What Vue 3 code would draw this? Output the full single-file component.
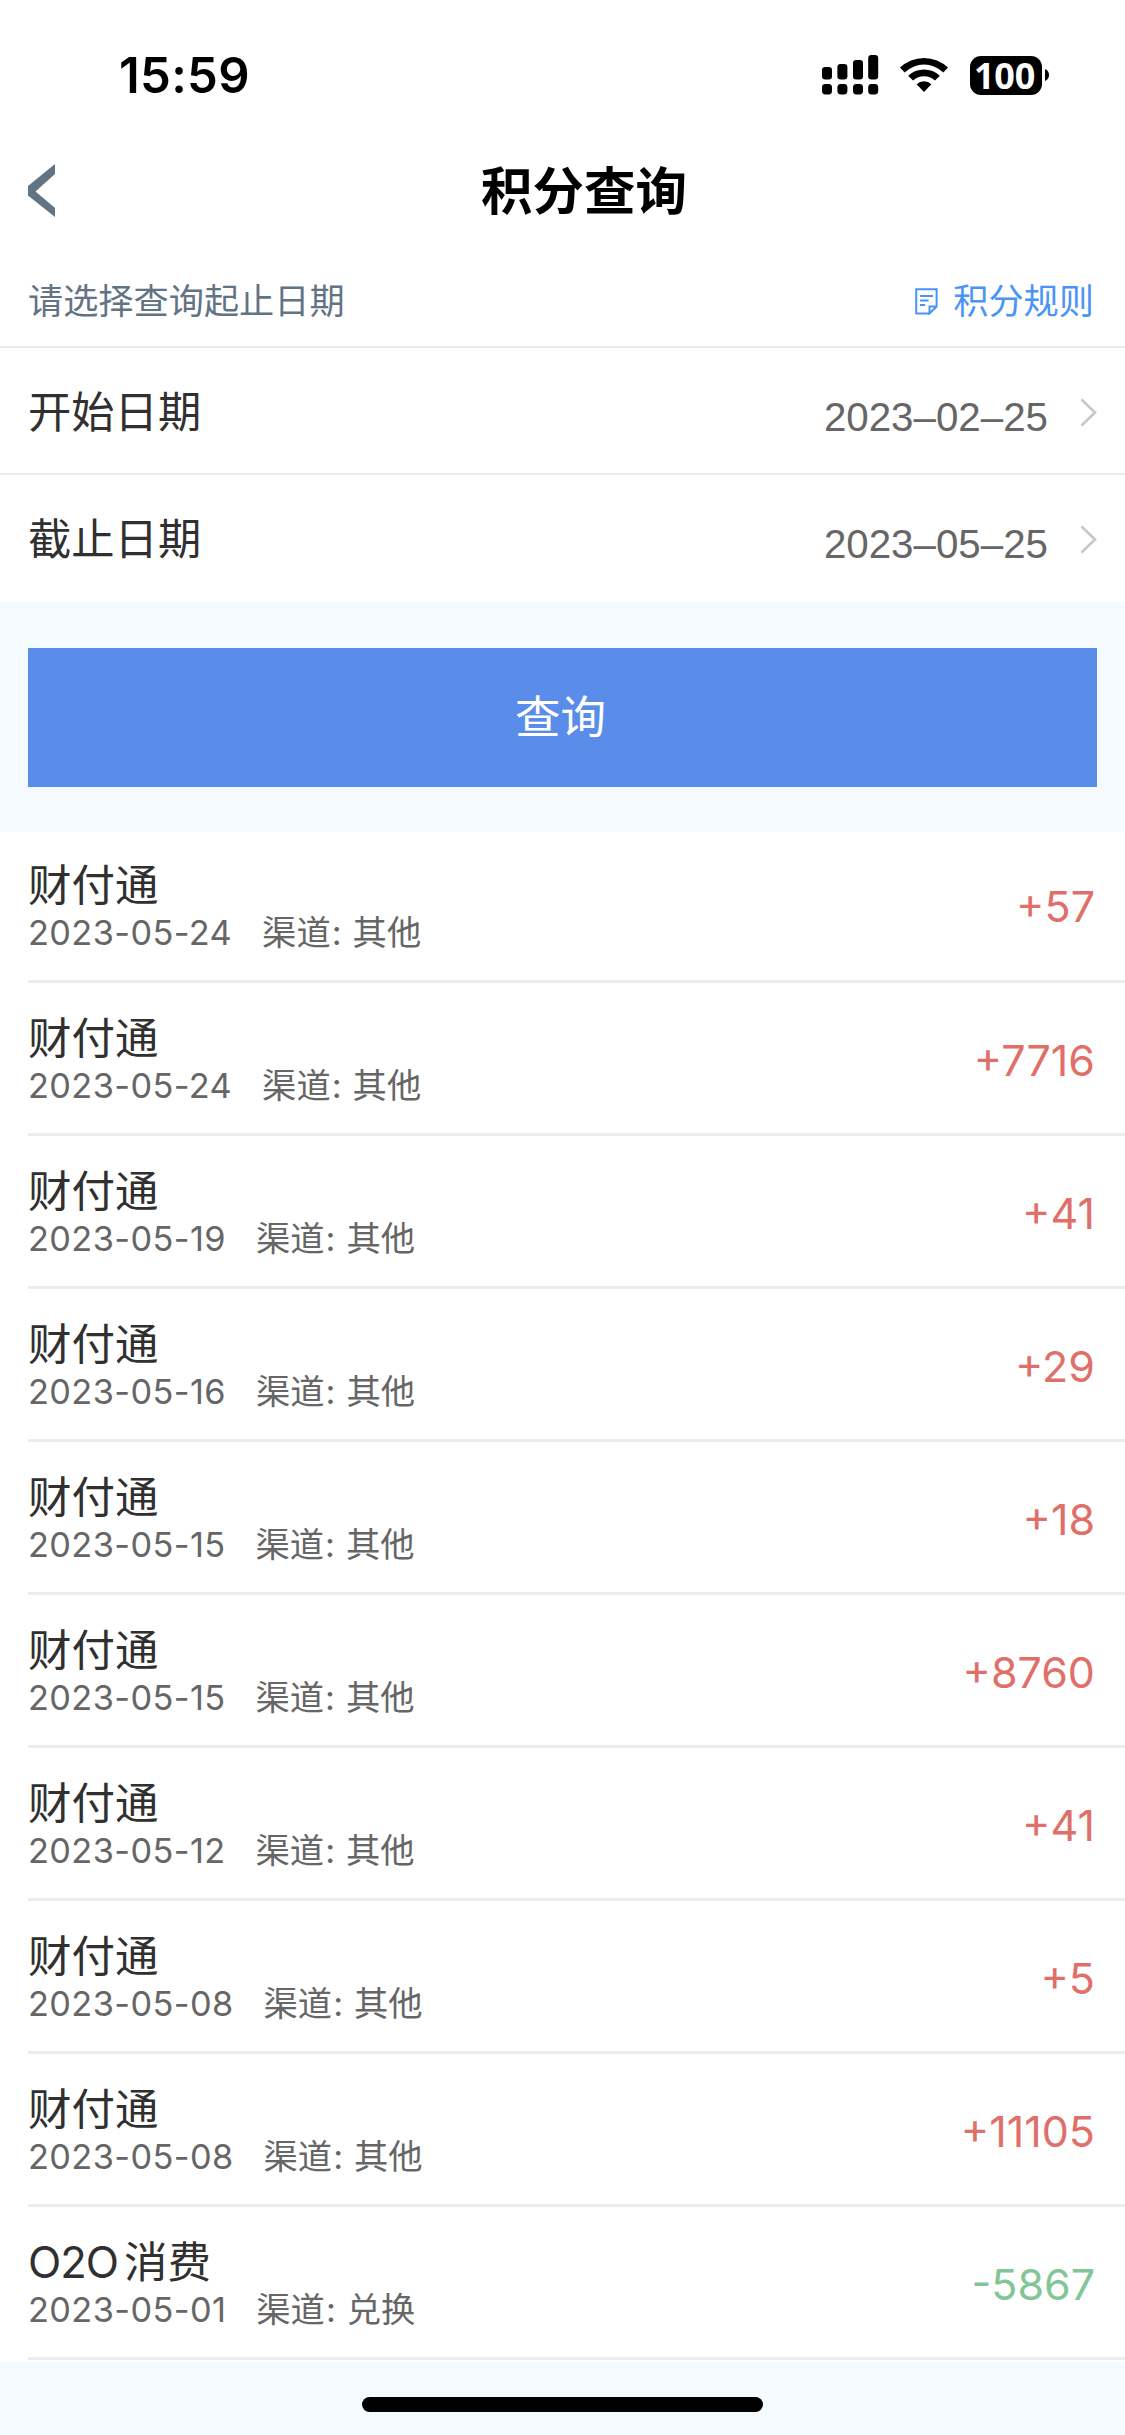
<script setup>
const signalBars = [
  { x: 0, top: 12 },
  { x: 15.4, top: 9 },
  { x: 31, top: 5 },
  { x: 46.2, top: 0 },
]

const dateFields = [
  { label: '开始日期', value: '2023–02–25' },
  { label: '截止日期', value: '2023–05–25' },
]

const records = [
  { title: '财付通', date: '2023-05-24', channel: '其他', amount: '+57' },
  { title: '财付通', date: '2023-05-24', channel: '其他', amount: '+7716' },
  { title: '财付通', date: '2023-05-19', channel: '其他', amount: '+41' },
  { title: '财付通', date: '2023-05-16', channel: '其他', amount: '+29' },
  { title: '财付通', date: '2023-05-15', channel: '其他', amount: '+18' },
  { title: '财付通', date: '2023-05-15', channel: '其他', amount: '+8760' },
  { title: '财付通', date: '2023-05-12', channel: '其他', amount: '+41' },
  { title: '财付通', date: '2023-05-08', channel: '其他', amount: '+5' },
  { title: '财付通', date: '2023-05-08', channel: '其他', amount: '+11105' },
  { prefix: 'O2O', title: '消费', date: '2023-05-01', channel: '兑换', amount: '-5867' },
]
</script>

<template>
  <div class="page">
    <div class="status">
      <span class="time">15:59</span>
      <div class="indicators">
        <svg class="signal" width="57" height="40" viewBox="0 0 57 40">
          <g v-for="bar in signalBars" :key="bar.x">
            <rect :x="bar.x" :y="bar.top" width="10" :height="24.5 - bar.top" rx="3.2" />
            <rect :x="bar.x" y="29" width="10" height="10.5" rx="3.4" />
          </g>
        </svg>
        <svg class="wifi" width="50" height="36" viewBox="0 0 50 36">
          <path d="M1 10.6 A34.5 34.5 0 0 1 49 10.6 L44.3 15.4 A27.8 27.8 0 0 0 5.7 15.4 Z" />
          <path d="M9.2 18.8 A22.8 22.8 0 0 1 40.8 18.8 L36 23.6 A16 16 0 0 0 14 23.6 Z" />
          <path d="M17.6 27.2 A10.8 10.8 0 0 1 32.4 27.2 L25 35 Z" />
        </svg>
        <div class="battery"><span>100</span></div>
        <svg class="nub" width="5" height="12" viewBox="0 0 5 12"><path d="M0 0 C5.4 2 5.4 10 0 12 Z" /></svg>
      </div>
    </div>

    <header class="navbar">
      <svg class="back" width="27" height="53" viewBox="0 0 27 53">
        <path d="M27 0 V10 L7.5 27.5 L27 44 V53 L0 31.5 V22 Z" />
      </svg>
      <h1>积分查询</h1>
    </header>

    <div class="hint">
      <span>请选择查询起止日期</span>
      <a class="rules">
        <svg width="23" height="27" viewBox="0 0 23 27" fill="none" stroke="currentColor" stroke-width="2">
          <path d="M14.5 25.5 H1.2 V1.2 H21.6 V18.5 L14.5 25.5 V18.5 H21.6" />
          <path d="M5 8 H18 M5 12.5 H13.5 M5 17 H10" />
        </svg>
        <span>积分规则</span>
      </a>
    </div>

    <div v-for="field in dateFields" :key="field.label" class="field">
      <span class="label">{{ field.label }}</span>
      <span class="value">{{ field.value }}</span>
      <svg class="arrow" width="17" height="29" viewBox="0 0 17 29">
        <path d="M1.5 1.5 L15 14.5 L1.5 27.5" />
      </svg>
    </div>

    <div class="action"><button type="button">查询</button></div>

    <ul class="list">
      <li v-for="(item, i) in records" :key="i">
        <div class="info">
          <p class="title"><span v-if="item.prefix" class="prefix">{{ item.prefix }}</span>{{ item.title }}</p>
          <p class="meta">
            <span class="day">{{ item.date }}</span>
            <span>渠道<i>:</i>{{ item.channel }}</span>
          </p>
        </div>
        <span class="amount" :class="{ spent: item.amount[0] === '-' }">{{ item.amount }}</span>
      </li>
    </ul>

    <footer><div class="home-bar"></div></footer>
  </div>
</template>

<style>
body {
  margin: 0;
  background: #f5fafe;
}
</style>

<style scoped>
.page {
  width: 1125px;
  height: 2435px;
  overflow: hidden;
  display: flex;
  flex-direction: column;
  background: #f5fafe;
  color: #303030;
  font-family: Inter, "Noto Sans CJK SC", sans-serif;
}
svg {
  display: block;
  flex: none;
}
.status {
  height: 150px;
  flex: none;
  box-sizing: border-box;
  padding: 45px 75px 0 119px;
  display: flex;
  justify-content: space-between;
  align-items: flex-start;
  background: #fff;
  color: #000;
}
.time {
  font-size: 49px;
  line-height: 61px;
  font-weight: 600;
  letter-spacing: 0.3px;
}
.indicators {
  display: flex;
  align-items: center;
  height: 40px;
  margin-top: 10px;
}
.wifi {
  margin-left: 20px;
}
.battery {
  width: 72px;
  height: 39px;
  margin-left: 21px;
  border-radius: 11px;
  background: #000;
  color: #fff;
  font-family: "Noto Sans", sans-serif;
  font-size: 36px;
  line-height: 39px;
  font-weight: 700;
  text-align: center;
  letter-spacing: -0.2px;
  text-indent: -3px;
}
.nub {
  margin-left: 3px;
}
.navbar {
  height: 80px;
  flex: none;
  padding: 0 28px;
  display: flex;
  align-items: center;
  background: #fff;
}
.back {
  fill: #627384;
}
h1 {
  flex: 1;
  margin: 1px 0 0 16px;
  text-align: center;
  color: #000;
  font-size: 51.5px;
  line-height: 80px;
  font-weight: 700;
}
.hint {
  height: 116px;
  flex: none;
  box-sizing: border-box;
  padding: 26px 31px 0 28px;
  display: flex;
  justify-content: space-between;
  align-items: center;
  background: #fff;
  color: #627384;
  font-size: 35.2px;
  line-height: 60px;
}
.rules {
  display: flex;
  align-items: center;
  gap: 15px;
  color: #4a94f8;
}
.field {
  height: 125px;
  flex: none;
  padding: 0 28px;
  border-top: 2px solid #ececec;
  display: flex;
  align-items: center;
  background: #fff;
}
.field:nth-of-type(4) {
  padding-bottom: 2px;
}
.label {
  flex: 1;
  margin-top: 2px;
  font-size: 43.3px;
  line-height: 60px;
}
.value {
  margin: 15px 32px 0 0;
  color: #666;
  font-family: "Liberation Sans", sans-serif;
  font-size: 40.3px;
  line-height: 50px;
}
.arrow {
  margin-top: 4px;
}
.arrow path {
  fill: none;
  stroke: #c6c6cb;
  stroke-width: 2.6;
}
.action {
  height: 230px;
  flex: none;
  box-sizing: border-box;
  padding: 46px 28px 45px;
}
button {
  display: block;
  width: 100%;
  height: 139px;
  padding: 0 4px 0 0;
  border: 0;
  background: #5a8de9;
  color: #fff;
  font: 400 45.5px/139px Inter, "Noto Sans CJK SC", sans-serif;
}
.list {
  margin: 0;
  padding: 0 0 2px 28px;
  list-style: none;
  background: #fff;
}
li {
  height: 150px;
  padding-right: 30px;
  border-bottom: 3px solid #ececec;
  display: flex;
  justify-content: space-between;
  align-items: center;
}
li:first-child {
  height: 148px;
}
.info p {
  margin: 0;
}
.info {
  padding-top: 4px;
}
li:first-child .info {
  padding-top: 2px;
}
.title {
  font-size: 43.5px;
  line-height: 52px;
}
.prefix {
  margin-right: 6px;
  letter-spacing: -1px;
}
.meta {
  display: flex;
  gap: 30px;
  color: #666;
  font-size: 34.3px;
  line-height: 44px;
}
.day {
  letter-spacing: 0.4px;
}
.meta i {
  margin: 0 11px 0 1px;
  font-style: normal;
}
.amount {
  margin-top: 3px;
  color: #e06f69;
  font-size: 43px;
  line-height: 60px;
}
li:first-child .amount {
  margin-top: 0;
}
.amount.spent {
  color: #82c596;
}
footer {
  flex: 1;
  display: flex;
  justify-content: center;
  align-items: flex-start;
  padding-top: 35px;
}
.home-bar {
  width: 401px;
  height: 15px;
  border-radius: 8px;
  background: #000;
}
</style>
